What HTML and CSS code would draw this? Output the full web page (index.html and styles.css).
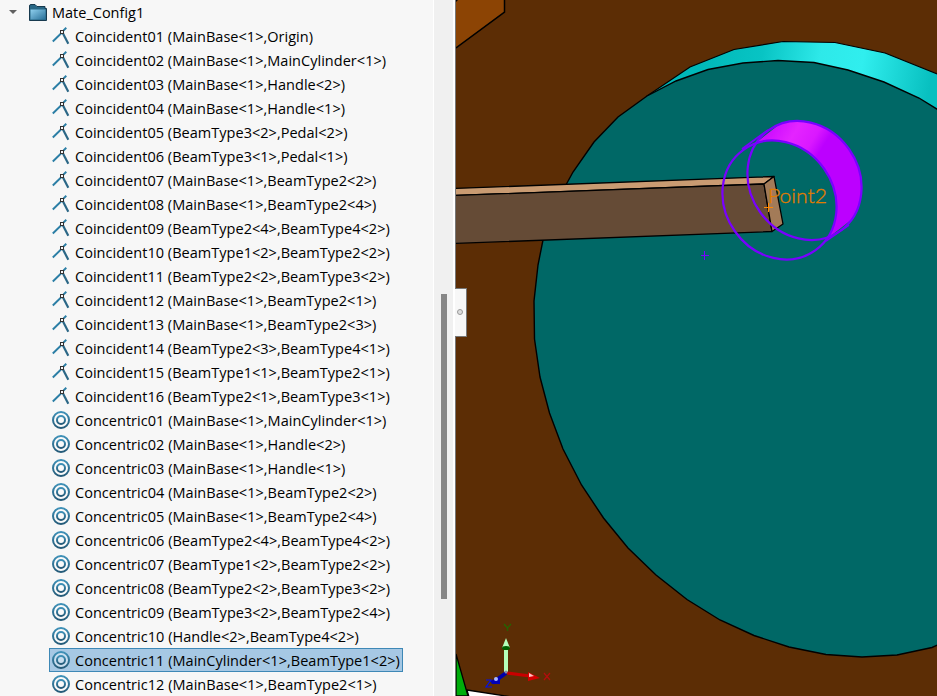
FILE: index.html
```
<!DOCTYPE html>
<html lang="en">
<head>
<meta charset="utf-8">
<title>Mate_Config1</title>
<link rel="stylesheet" href="styles.css">
</head>
<body>
<svg width="0" height="0" class="defs">
  <defs>
    <linearGradient id="steel" x1="0" y1="0" x2="0" y2="1"><stop offset="0" stop-color="#3f91b8"/><stop offset="1" stop-color="#245a78"/></linearGradient>
    <linearGradient id="folder" x1="0" y1="0" x2="1" y2="1"><stop offset="0" stop-color="#8fd0ee"/><stop offset="1" stop-color="#286f98"/></linearGradient>
    <symbol id="coincident" viewBox="0 0 18 18">
      <path d="M.8 14.5 9.500 6M11.500 3.500 14.300.8" stroke="#2b7ea5" stroke-width="1.900" fill="none"/>
      <path d="M11 6.500 16.300 16.700" stroke="#2b6786" stroke-width="2.200" fill="none"/>
      <rect x="8.500" y="3.500" width="3" height="3" fill="#f7f7f7" stroke="#333" stroke-width="1"/>
    </symbol>
    <symbol id="concentric" viewBox="0 0 18 18">
      <circle cx="9" cy="9" r="8" fill="#fff" fill-opacity=".4" stroke="url(#steel)" stroke-width="2"/>
      <circle cx="9" cy="9" r="4" fill="none" stroke="url(#steel)" stroke-width="2"/>
    </symbol>
  </defs>
</svg>
<main class="app">
  <section class="tree">
    <header class="folder">
      <span class="caret"></span>
      <svg class="folder-icon" viewBox="0 0 18 17"><path d="M.5 16.500V2Q.5.500 2 .500H6L8 2.500H16V4.500H17.500V16.500Z" fill="#286785" stroke="#17394e"/><path d="M1.500 5.500H16.500V15.500H1.500Z" fill="url(#folder)"/></svg>
      <span class="label">Mate_Config1</span>
    </header>
    <ul class="mates" id="mates"></ul>
  </section>
  <div class="scroll"><div class="thumb"></div></div>
  <section class="view">
    <svg class="scene" viewBox="456 0 481 696">
      <defs>
        <linearGradient id="rim" gradientUnits="userSpaceOnUse" x1="690" y1="110" x2="937" y2="150">
          <stop offset="0" stop-color="#00b8b8"/><stop offset=".25" stop-color="#08c4c4"/><stop offset=".48" stop-color="#2ee9e9"/><stop offset=".65" stop-color="#30eeee"/><stop offset=".93" stop-color="#08c0c0"/>
        </linearGradient>
        <linearGradient id="pin" gradientUnits="userSpaceOnUse" x1="764" y1="130" x2="825" y2="168">
          <stop offset="0" stop-color="#c808ff"/><stop offset=".38" stop-color="#e424ff"/><stop offset=".65" stop-color="#da18ff"/><stop offset=".82" stop-color="#bc00ff"/>
        </linearGradient>
      </defs>
      <rect x="456" width="481" height="696" fill="#5c2d05"/>
      <path d="M456 0H504V12L456 48Z" fill="#8c4404"/>
      <path d="M504.500 0V12L456 48" fill="none" stroke="#000" stroke-width="1.500"/>
      <path d="M456 0H458L456 2Z"/>
      <path d="M456 654 468 696H456Z" fill="#00ad0b" stroke="#000" stroke-width="1.300"/>
      <path d="M467 690 512 697H469Z" fill="#fff" stroke="#000" stroke-width="1.300"/>
      <path d="M647 96 690 67 734 49.500 783 41.500 835 42.500 885 53 940 75V150H647Z" fill="url(#rim)" stroke="#000" stroke-width="1.200"/>
      <path d="M940 111 919 98 884 82 848 70 814 62.500 778 60.500 743 63 708 69.500 676 81 647 96 618 117 594 142 573 172 555 205 543 240 538 265 534 301 534.500 339 540 377 549.500 413 563 449 581.500 485 603.500 518 628 548 656 575 687 599.500 720 620 754 635.500 789 647 826 654.500 862 657 897 655 932 647.500 940 644Z" fill="#006866" stroke="#000" stroke-width="1.400"/>
      <g stroke="#000" stroke-width="1.300" stroke-linejoin="round">
        <path d="M455 188.500 774 176.500 764 184 455 195.500Z" fill="#c99b72"/>
        <path d="M455 195.500 764 184 772 231.500 455 243.500Z" fill="#654b36"/>
        <path d="M764 184 774 176.500 783 224 772 231.500Z" fill="#a37b58"/>
      </g>
      <path d="M755 143.500 780.500 123.500A54.800 62.400 -35.300 0 1 853.500 218L828 238A54.800 62.400 -35.300 0 0 755 143.500Z" fill="url(#pin)"/>
      <g fill="none" stroke="#7900ff" stroke-width="2.200">
        <ellipse cx="779.500" cy="200" rx="54.500" ry="61.800" transform="rotate(-35.300 779.500 200)"/>
        <ellipse cx="804.500" cy="180.500" rx="54.500" ry="61.800" transform="rotate(-35.300 804.500 180.500)"/>
        <path d="M742 149 768 130M826 241 849 225" stroke-width="1.800"/>
        <path d="M701 255.500H709M704.500 251V260" stroke-width="1"/>
      </g>
      <path d="M764 207.500H773M768.500 203V212" stroke="#ff8800"/>
      <text x="768" y="203" class="point" textLength="59" lengthAdjust="spacingAndGlyphs">Point2</text>
      <path d="M504 646H508V672H504Z" fill="#b4ffba"/><path d="M506 638 510 648H502Z" fill="#b4ffba"/><ellipse cx="506" cy="648" rx="4" ry="2" fill="#006000"/>
      <path d="M507 673 530 676" stroke="#c80000" stroke-width="3"/><path d="M528 672 540 678 528 681Z" fill="#d40000"/><path d="m529 673 5 3-5 1z" fill="#ffc0c0"/>
      <path d="M506 673 495 681" stroke="#0000a8" stroke-width="4"/><path d="M500 677 490 681 492 684 500 684Z" fill="#0000b8"/><circle cx="496" cy="679" r="2" fill="#aab8ff"/><circle cx="506" cy="672" r="1.500" fill="#88a"/>
      <g fill="none" stroke-width="1.200"><path d="M504 624 507.500 628 511 624M507.500 628V631" stroke="#246500"/><path d="M544 673 550 680M550 673 544 680" stroke="#b40d0d"/><path d="M486 680H491L486 687H492" stroke="#0011ef"/></g>
    </svg>
    <div class="handle"><i></i></div>
  </section>
</main>
<script src="tree.js"></script>
</body>
</html>
```

FILE: styles.css
```
*{box-sizing:border-box}
body{margin:0;background:#f7f7f7;overflow:hidden;font:14.5px/22px "Open Sans","Noto Sans",sans-serif;color:#000}
.defs{position:absolute}
.app{display:flex;width:937px;height:696px}
.tree{width:433px;flex:none;background:#f7f7f7;white-space:nowrap;overflow:hidden}
.folder{display:flex;height:24px;padding-left:9px;align-items:center}
.caret{border:4px solid transparent;border-top:4px solid #606060;border-bottom:0;width:8px;margin-right:12px}
.folder-icon{width:18px;height:17px;margin-right:5px}
.mates{list-style:none;margin:0 0 0 49px;padding:0;width:354px}
.mates li{display:flex;align-items:center;height:24px;padding-left:3px}
.mates svg{width:18px;height:18px;margin-right:5px;flex:none}
.mates .selected{background:#a6c8e4;box-shadow:inset 0 0 0 1px #3e88b6}
.label{display:block;padding-top:2px}
.mates .label{letter-spacing:.03px}
.scroll{width:22px;flex:none;background:#f0f0f0;border-left:1px solid #fff;border-right:2px solid #fff;padding:294px 0 0 7px}
.thumb{width:6px;height:305px;background:#868686}
.view{position:relative;width:482px;border-left:1px solid #777}
.scene{display:block;width:481px;height:696px}
.point{font:300 20px Lato,sans-serif;fill:#e27c00;stroke:#e27c00;stroke-width:.3px}
.handle{position:absolute;left:-1px;top:288px;width:12px;height:49px;background:#f7f7f7;border:1px solid #777;border-left:0;display:flex;align-items:center;justify-content:center;padding:0 2px 2px 0}
.handle i{width:6px;height:6px;border:1px solid #999;border-radius:50%;background:#ddd}
```

FILE: tree.js
```
const coincident = [
  "MainBase<1>,Origin", "MainBase<1>,MainCylinder<1>", "MainBase<1>,Handle<2>", "MainBase<1>,Handle<1>",
  "BeamType3<2>,Pedal<2>", "BeamType3<1>,Pedal<1>", "MainBase<1>,BeamType2<2>", "MainBase<1>,BeamType2<4>",
  "BeamType2<4>,BeamType4<2>", "BeamType1<2>,BeamType2<2>", "BeamType2<2>,BeamType3<2>", "MainBase<1>,BeamType2<1>",
  "MainBase<1>,BeamType2<3>", "BeamType2<3>,BeamType4<1>", "BeamType1<1>,BeamType2<1>", "BeamType2<1>,BeamType3<1>"
];
const concentric = [
  "MainBase<1>,MainCylinder<1>", "MainBase<1>,Handle<2>", "MainBase<1>,Handle<1>", "MainBase<1>,BeamType2<2>",
  "MainBase<1>,BeamType2<4>", "BeamType2<4>,BeamType4<2>", "BeamType1<2>,BeamType2<2>", "BeamType2<2>,BeamType3<2>",
  "BeamType3<2>,BeamType2<4>", "Handle<2>,BeamType4<2>", "MainCylinder<1>,BeamType1<2>", "MainBase<1>,BeamType2<1>"
];
const list = document.getElementById("mates");
function add(kind, parts, i) {
  const li = document.createElement("li");
  li.innerHTML = `<svg><use href="#${kind.toLowerCase()}"/></svg>`;
  const label = document.createElement("span");
  label.className = "label";
  label.textContent = `${kind}${String(i + 1).padStart(2, "0")} (${parts})`;
  if (kind === "Concentric" && i === 10) li.className = "selected";
  li.append(label);
  list.append(li);
}
coincident.forEach((p, i) => add("Coincident", p, i));
concentric.forEach((p, i) => add("Concentric", p, i));
```
